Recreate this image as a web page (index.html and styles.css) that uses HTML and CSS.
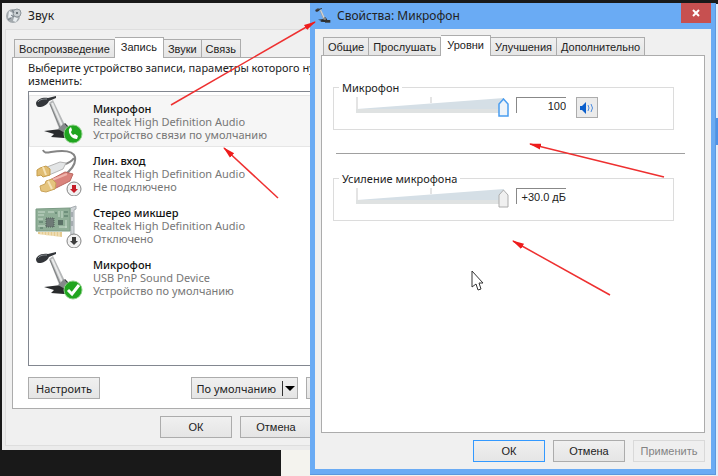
FILE: index.html
```html
<!DOCTYPE html>
<html lang="ru">
<head>
    <meta charset="UTF-8">
    <meta name="viewport" content="width=device-width, initial-scale=1.0">
    <title>Свойства: Микрофон</title>
    <link rel="stylesheet" href="styles.css">
</head>
<body>

    <div class="desktop">
        <div class="page-behind"></div>
        <div class="edge"></div>

        <!-- Окно "Звук" -->
        <section class="window sound">
            <header class="titlebar">
                <svg class="title-icon" width="16" height="16" viewBox="0 0 16 16">
                    <circle cx="7" cy="8" r="7" fill="#a3a9ad"/>
                    <path d="M3 3l4 2-1 4-4 1zM8 9l4 1-2 4-3-1z" fill="#e8edf0"/>
                    <circle cx="11" cy="5" r="4" fill="#c7cdd0" stroke="#8d959a"/>
                    <circle cx="11" cy="5" r="1" fill="#4d565c"/>
                    <path d="M2 12l3-2M6 2l2 3M5 7l3 2" stroke="#76808a"/>
                </svg>
                <h1>Звук</h1>
            </header>
            <div class="client">
                <nav class="tabs">
                    <button class="tab">Воспроизведение</button>
                    <button class="tab active">Запись</button>
                    <button class="tab">Звуки</button>
                    <button class="tab">Связь</button>
                </nav>
                <div class="panel">
                    <p class="hint">Выберите устройство записи, параметры которого нужно изменить:</p>
                    <ul class="devices">
                        <li class="device selected">
                            <svg class="device-icon" width="50" height="48" viewBox="0 0 50 48">
                                <use href="#mic"/>
                                <circle cx="38" cy="38" r="9" fill="#20a51f" stroke="#8bcf86"/>
                                <path d="M34 33c-1 5 3 10 8 10l1-3-3-2-2 1c-1-1-2-2-2-3l1-2-1-3z" fill="#fff"/>
                            </svg>
                            <div>
                                <h2>Микрофон</h2>
                                <p>Realtek High Definition Audio</p>
                                <p>Устройство связи по умолчанию</p>
                            </div>
                        </li>
                        <li class="device">
                            <svg class="device-icon" width="50" height="48" viewBox="0 0 50 48">
                                <path d="M8 2c1 3 3 3 8 2 12-2 22-2 24 5 1 6-3 13-12 19M39 10c-3 5-9 6-14 8" fill="none" stroke="#858585" stroke-width="2"/>
                                <path d="M12 19l13-5 6 1-3 6-14 6z" fill="#e3e5e6" stroke="#b5b5b5"/>
                                <path d="M15 32l15-8 8 2-3 7-16 8z" fill="#d9837c" stroke="#bb665f"/>
                                <path d="M17 32l15-6" stroke="#efb4ab" stroke-width="2"/>
                                <path d="M2 22l3-2 6-2 4 3v6l-7 2-2-2-4 1z" fill="#e1bd72" stroke="#c69d4b"/>
                                <path d="M5 38l5-2 1-3 6-2 4 4-1 6-9 3-5-1z" fill="#e5c47d" stroke="#c9a35a"/>
                                <path d="M8 19l3 8M13 33l4 8" stroke="#f5e3b8" stroke-width="2"/>
                                <circle cx="39" cy="41" r="7" fill="#f1f1f1" stroke="#858585"/>
                                <path d="M37 37h4v4h2l-4 4-4-4h2z" fill="#c51d29"/>
                            </svg>
                            <div>
                                <h2>Лин. вход</h2>
                                <p>Realtek High Definition Audio</p>
                                <p>Не подключено</p>
                            </div>
                        </li>
                        <li class="device">
                            <svg class="device-icon" width="50" height="48" viewBox="0 0 50 48">
                                <path d="M35 8l6-2v3l-2 1v27h-3z" fill="#ced3d6" stroke="#a8aeb2"/>
                                <path d="M1 9l34-1v23L1 31z" fill="#8fae97" stroke="#7b9b84"/>
                                <path d="M3 32h24v5l-24-3z" fill="#e5cb91"/>
                                <path d="M6 32v3m3-3v3m3-3v4m3-4v4m3-4v4m3-4v4m3-4v5" stroke="#f6ecd2"/>
                                <path d="M3 12h7M3 15h6M3 19h5M3 26h7M13 12h6M24 11v6M27 11v7M31 20v8M24 27h8" stroke="#c9dccd"/>
                                <path d="M4 22h4M5 28h3M20 13h2M29 12h4M29 16h4" stroke="#4f7360"/>
                                <rect x="11" y="18" width="8" height="9" fill="#6e7a77" stroke="#4f6159" stroke-dasharray="1 1"/>
                                <rect x="23" y="20" width="5" height="5" fill="#5a7166"/>
                                <path d="M37 12v5M37 21v5" stroke="#7d868b"/>
                                <circle cx="39" cy="41" r="7" fill="#f1f1f1" stroke="#858585"/>
                                <path d="M37 37h4v4h2l-4 4-4-4h2z" fill="#3d3d3d"/>
                            </svg>
                            <div>
                                <h2>Стерео микшер</h2>
                                <p>Realtek High Definition Audio</p>
                                <p>Отключено</p>
                            </div>
                        </li>
                        <li class="device">
                            <svg class="device-icon" width="50" height="48" viewBox="0 0 50 48">
                                <use href="#mic"/>
                                <circle cx="38" cy="38" r="9" fill="#20a51f" stroke="#8bcf86"/>
                                <path d="M33 38l4 4 7-9" fill="none" stroke="#fff" stroke-width="3"/>
                            </svg>
                            <div>
                                <h2>Микрофон</h2>
                                <p>USB PnP Sound Device</p>
                                <p>Устройство по умолчанию</p>
                            </div>
                        </li>
                    </ul>
                    <div class="panel-buttons">
                        <button class="btn configure">Настроить</button>
                        <button class="btn split">По умолчанию <span class="arrow"></span></button>
                        <button class="btn">Свойства</button>
                    </div>
                </div>
                <footer class="dialog-buttons">
                    <button class="btn">ОК</button>
                    <button class="btn">Отмена</button>
                    <button class="btn" disabled>Применить</button>
                </footer>
            </div>
        </section>

        <!-- Окно "Свойства: Микрофон" -->
        <section class="window props">
            <header class="titlebar">
                <svg class="title-icon" width="16" height="16" viewBox="0 0 48 48">
                    <use href="#mic"/>
                    <path d="M30 36h16v8h-16z" fill="#333"/>
                </svg>
                <h1>Свойства: Микрофон</h1>
                <button class="close" aria-label="Закрыть">
                    <svg width="8" height="8" viewBox="0 0 8 8"><path d="M1 1l6 6M7 1L1 7" stroke="#fff" stroke-width="2"/></svg>
                </button>
            </header>
            <div class="client">
                <nav class="tabs">
                    <button class="tab">Общие</button>
                    <button class="tab">Прослушать</button>
                    <button class="tab active">Уровни</button>
                    <button class="tab">Улучшения</button>
                    <button class="tab">Дополнительно</button>
                </nav>
                <div class="panel">
                    <fieldset class="level">
                        <legend><label for="micLevel">Микрофон</label></legend>
                        <div class="slider">
                            <svg class="scale" viewBox="0 0 148 14" preserveAspectRatio="none">
                                <path d="M1 12L148 1v11z" fill="#d5dfe6"/>
                                <path d="M1 0v12M75 0v6" stroke="#c9c9c9"/>
                            </svg>
                            <input type="range" id="micLevel" class="range focused" min="0" max="100" value="100">
                        </div>
                        <input type="text" class="value" value="100" aria-label="Уровень микрофона" readonly>
                        <button class="mute" aria-label="Выключить звук">
                            <svg width="16" height="14" viewBox="0 0 16 14">
                                <path d="M1 5h2l4-4v12l-4-4H1z" fill="#0b5fcc"/>
                                <path d="M9 4q2 3 0 6M12 3q3 4 0 8" fill="none" stroke="#4b8be0"/>
                            </svg>
                        </button>
                    </fieldset>
                    <hr>
                    <fieldset class="level">
                        <legend><label for="micBoost">Усиление микрофона</label></legend>
                        <div class="slider">
                            <svg class="scale" viewBox="0 0 148 14" preserveAspectRatio="none">
                                <path d="M1 12L148 1v11z" fill="#d5dfe6"/>
                                <path d="M1 0v12M75 0v6" stroke="#c9c9c9"/>
                            </svg>
                            <input type="range" id="micBoost" class="range" min="0" max="30" value="30">
                        </div>
                        <input type="text" class="value" value="+30.0 дБ" aria-label="Усиление" readonly>
                    </fieldset>
                </div>
                <footer class="dialog-buttons">
                    <button class="btn default">ОК</button>
                    <button class="btn">Отмена</button>
                    <button class="btn" disabled>Применить</button>
                </footer>
            </div>
        </section>

        <!-- Красные стрелки и курсор -->
        <svg class="marks">
            <defs>
                <marker id="head" markerWidth="12" markerHeight="8" refX="11" refY="4" orient="auto" markerUnits="userSpaceOnUse">
                    <path d="M0 1l12 3-12 3z" fill="#ee1c1c"/>
                </marker>
                <g id="mic">
                    <path d="M14 7l4-3 13 27-6 4z" fill="#b5b7b8"/>
                    <path d="M17 7l11 25" stroke="#e9eaea" stroke-width="2"/>
                    <path d="M15 8l11 26" stroke="#7c7f80"/>
                    <path d="M1 7c1-4 7-6 12-5l8-2 0 2-7 3c-2 4-6 6-10 6-2 0-3-2-3-4z" fill="#33363a"/>
                    <path d="M3 6c2-3 6-3 9-3" fill="none" stroke="#8c9196"/>
                    <path d="M9 35l17-2 4-6 5 5 3 7-9 3-13-1 3-3z" fill="#292b2d"/>
                    <path d="M23 33l6-6 5 6-4 4z" fill="#85898b"/>
                </g>
            </defs>
            <g stroke="#ee3030" stroke-width="1.5">
                <line x1="171" y1="105" x2="315" y2="22" marker-end="url(#head)"/>
                <line x1="278" y1="198" x2="224" y2="148" marker-end="url(#head)"/>
                <line x1="664" y1="177" x2="530" y2="144" marker-end="url(#head)"/>
                <line x1="610" y1="295" x2="513" y2="241" marker-end="url(#head)"/>
            </g>
            <path d="M472 271v16l4-3 2 6 3-1-2-6h4z" fill="#fff" stroke="#333"/>
        </svg>
    </div>

</body>
</html>
```

FILE: styles.css
```css
body {
    margin: 0;
    font-family: "Noto Sans", "Open Sans", sans-serif;
    font-size: 11px;
    line-height: 13px;
    color: #222;
}

.desktop {
    position: relative;
    height: 100vh;
    min-height: 440px;
    overflow: hidden;
    background: #191919;
}

.page-behind {
    position: absolute;
    left: 281px;
    right: 0;
    bottom: 0;
    height: 26px;
    background: #f4f3ee;
}

.edge {
    position: absolute;
    top: 4px;
    right: 0;
    bottom: 0;
    width: 4px;
    background: linear-gradient(#e4edf8 114px, #4d92e6 114px, #4d92e6 141px, #e4edf8 141px);
}

/* Окна */
.window {
    position: absolute;
    display: flex;
    flex-direction: column;
    box-sizing: border-box;
}

.sound {
    top: 3px;
    left: 2px;
    bottom: 26px;
    width: 403px;
    padding: 0 4px 4px 3px;
    background: #ebebeb;
}

.props {
    top: 3px;
    left: 310px;
    right: 2px;
    bottom: 1px;
    padding: 0 4px 5px 5px;
    background: #6aabf4;
    border: 1px solid #5b98de;
    border-width: 0 1px 1px 0;
}

.titlebar {
    display: flex;
    align-items: center;
    gap: 6px;
    height: 26px;
}

.titlebar h1 {
    flex: 1;
    margin: 0;
    font-size: 12px;
    line-height: 18px;
    font-weight: normal;
}

.title-icon {
    flex: none;
}

.sound .title-icon {
    margin-left: 1px;
}

.close {
    align-self: flex-start;
    width: 30px;
    height: 20px;
    padding: 0;
    border: none;
    background: #c75050;
    line-height: 8px;
}

.client {
    flex: 1;
    display: flex;
    flex-direction: column;
    padding: 7px 6px;
    background: #f0f0f0;
}

.sound .client {
    padding-top: 8px;
    padding-right: 9px;
    border: 1px solid #dedede;
    border-width: 1px 0 1px 1px;
}

/* Вкладки */
.tabs {
    display: flex;
    align-items: flex-end;
    height: 19px;
    padding-left: 2px;
}

.tab {
    height: 18px;
    padding: 0 4px;
    border: 1px solid #acacac;
    border-bottom: none;
    border-left-width: 0;
    background: linear-gradient(#f0f0f0, #e5e5e5);
    font-family: "Liberation Sans", Arial, sans-serif;
    font-size: 11px;
    color: inherit;
    white-space: nowrap;
}

.tab:first-child {
    border-left-width: 1px;
}

.tab.active {
    position: relative;
    height: 21px;
    margin-bottom: -1px;
    padding: 0 6px 2px;
    background: #fff;
}

.panel {
    flex: 1;
    display: flex;
    flex-direction: column;
    background: #fff;
    border: 1px solid #acacac;
}

.sound .panel {
    padding: 3px 13px 9px 15px;
}

.props .panel {
    padding: 25px 19px 0 11px;
}

/* Устройства */
.hint {
    margin: 0 0 4px;
    width: 350px;
}

.devices {
    flex: 1;
    margin: 0;
    padding: 4px 1px;
    list-style: none;
    border: 1px solid #828790;
}

.device {
    display: flex;
    gap: 8px;
    height: 50px;
    margin-bottom: 2px;
    padding-left: 5px;
    color: #777;
}

.device.selected {
    background: #f6f6f6;
    box-shadow: 0 0 0 1px #e6e6e6;
}

.device div {
    padding-top: 6px;
}

.device h2 {
    margin: 0;
    font-size: 11px;
    font-weight: 500;
    color: #111;
}

.device p {
    margin: 0;
}

/* Кнопки */
.btn {
    height: 22px;
    min-width: 72px;
    padding: 0 5px;
    border: 1px solid #acacac;
    background: linear-gradient(#f0f0f0, #e5e5e5);
    font: inherit;
    color: inherit;
    white-space: nowrap;
}

.btn.default {
    border-color: #3399ff;
}

.btn:disabled {
    border-color: #d9d9d9;
    background: #efefef;
    color: #838383;
}

.panel-buttons {
    display: flex;
    gap: 8px;
    margin-top: 11px;
}

.configure {
    margin-right: auto;
}

.split {
    display: flex;
    align-items: center;
    gap: 6px;
    padding: 0 2px 0 5px;
}

.arrow {
    display: flex;
    align-items: center;
    height: 15px;
    padding-left: 2px;
    border-left: 1px solid #333;
}

.arrow::after {
    content: "";
    border: 5px solid transparent;
    border-top-color: #000;
    border-bottom: none;
}

.dialog-buttons {
    display: flex;
    justify-content: flex-end;
    gap: 8px;
    padding-top: 7px;
}

.dialog-buttons .btn {
    font-family: "Liberation Sans", Arial, sans-serif;
}

/* Уровни */
.level {
    display: flex;
    align-items: flex-start;
    min-width: 0;
    margin: 0 11px 0 0;
    padding: 3px 20px 11px 22px;
    border: 1px solid #dcdcdc;
}

.level legend {
    margin-left: -17px;
    padding: 0 3px;
}

.slider {
    display: grid;
    flex: 0 1 153px;
    height: 21px;
}

.scale {
    grid-area: 1 / 1;
    width: 148px;
    height: 14px;
}

.range {
    grid-area: 1 / 1;
    appearance: none;
    width: 100%;
    height: 21px;
    margin: 0;
    background: linear-gradient(#dfe2e2, #dfe2e2) 0 12px / 149px 4px no-repeat;
    outline: none;
}

.range::-webkit-slider-thumb {
    appearance: none;
    width: 11px;
    height: 19px;
    background: url("data:image/svg+xml,%3Csvg xmlns='http://www.w3.org/2000/svg' width='11' height='19'%3E%3Cpath d='M1 18V6l4.500-5L10 6v12z' fill='%23f0f0f0' stroke='%23acacac'/%3E%3C/svg%3E");
}

.range.focused::-webkit-slider-thumb {
    background: url("data:image/svg+xml,%3Csvg xmlns='http://www.w3.org/2000/svg' width='11' height='19'%3E%3Cpath d='M1 18V6l4.500-5L10 6v12z' fill='%23eef4fa' stroke='%234a9df0' stroke-width='1.500'/%3E%3C/svg%3E");
}

.value {
    box-sizing: border-box;
    width: 50px;
    height: 16px;
    margin-left: 7px;
    padding: 0;
    border: 1px solid #888;
    border-width: 1px 0 0 1px;
    background: #fff;
    font-family: "Liberation Sans", Arial, sans-serif;
    font-size: 11px;
    color: inherit;
    text-align: right;
}

.mute {
    display: flex;
    align-items: center;
    justify-content: center;
    width: 22px;
    height: 21px;
    margin-left: 10px;
    padding: 0;
    border: 1px solid #acacac;
    background: #ebebeb;
}

hr {
    align-self: stretch;
    margin: 23px 0 18px 3px;
    border: none;
    border-top: 1px solid #a0a0a0;
}

/* Пометки поверх окон */
.marks {
    position: absolute;
    top: 0;
    left: 0;
    width: 100%;
    height: 100%;
    pointer-events: none;
}
```
